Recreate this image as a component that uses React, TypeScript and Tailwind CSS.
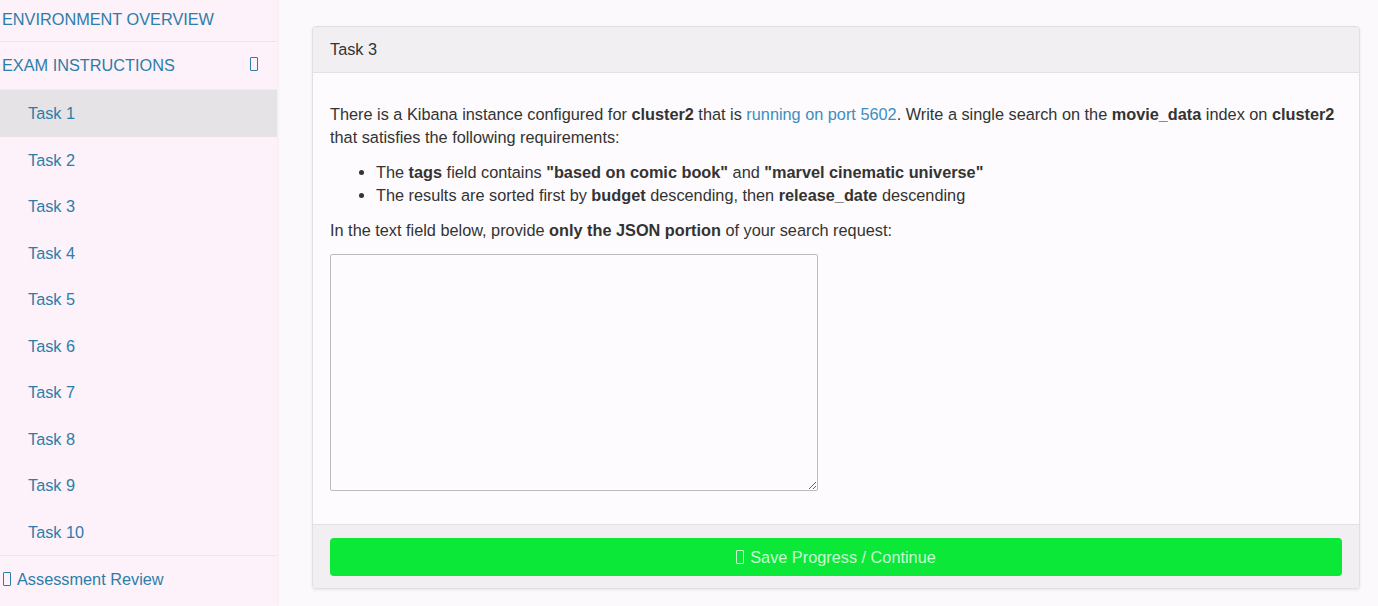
import React from "react";

const tasks = ["Task 1", "Task 2", "Task 3", "Task 4", "Task 5", "Task 6", "Task 7", "Task 8", "Task 9", "Task 10"];

function Tofu({ className = "" }: { className?: string }) {
  return <span className={`inline-block h-[14px] w-[8px] border border-current rounded-[1px] ${className}`} />;
}

export default function App() {
  return (
    <div
      className="flex h-[606px] w-[1378px] overflow-hidden bg-[#fcf9fc] text-[16.3px] text-[#333]"
      style={{ fontFamily: '"Liberation Sans", Arial, sans-serif' }}
    >
      <aside className="flex w-[277px] shrink-0 flex-col bg-[#fdf1fa] text-[#2b7ea8] shadow-[1px_0_3px_rgba(0,0,0,0.06)]">
        <div className="flex h-[42px] shrink-0 items-center border-b border-[#eee3eb] pl-[2px] pb-[3px] uppercase">
          Environment Overview
        </div>
        <div className="flex h-[48px] shrink-0 items-center justify-between border-b border-[#f3e8f0] pl-[2px] pr-[19px] uppercase">
          <span>Exam Instructions</span>
          <Tofu className="mb-[3px]" />
        </div>
        {tasks.map((t, i) => (
          <div
            key={t}
            className={`flex h-[46.5px] shrink-0 items-center pl-[28px] ${i === 0 ? "bg-[#e6e3e6]" : ""}`}
          >
            {t}
          </div>
        ))}
        <div className="flex h-[47px] shrink-0 items-center gap-[6px] border-t border-[#f1e5ee] pl-[3px]">
          <Tofu />
          <span>Assessment Review</span>
        </div>
      </aside>

      <main className="flex-1 pl-[35px] pr-[18px] pt-[26px]">
        <div className="overflow-hidden rounded-[4px] border border-[#e2dfe2] bg-[#fdfbfd] shadow-[0_1px_3px_rgba(0,0,0,0.08)]">
          <div className="flex h-[46px] items-center border-b border-[#e4e1e4] bg-[#f2eff2] px-[17px]">Task 3</div>
          <div className="px-[17px] pb-[33px] pt-[30px] leading-[23px]">
            <p>
              There is a Kibana instance configured for <b>cluster2</b> that is{" "}
              <a className="text-[#3b8ec2]">running on port 5602</a>. Write a single search on the <b>movie_data</b>{" "}
              index on <b>cluster2</b> that satisfies the following requirements:
            </p>
            <ul className="mt-[12px] list-disc pl-[46px]">
              <li>
                The <b>tags</b> field contains <b>"based on comic book"</b> and <b>"marvel cinematic universe"</b>
              </li>
              <li>
                The results are sorted first by <b>budget</b> descending, then <b>release_date</b> descending
              </li>
            </ul>
            <p className="mt-[12px]">
              In the text field below, provide <b>only the JSON portion</b> of your search request:
            </p>
            <textarea className="mt-[12px] block h-[237px] w-[488px] rounded-[2px] border border-[#bdbbbd] bg-[#fdfbfd]" />
          </div>
          <div className="border-t border-[#e4e1e4] bg-[#f2eff2] px-[17px] pb-[12px] pt-[13px]">
            <button className="flex h-[38px] w-full items-center justify-center gap-[6px] rounded-[4px] bg-[#0be838] text-[#c9fbd4]">
              <Tofu />
              <span>Save Progress / Continue</span>
            </button>
          </div>
        </div>
      </main>
    </div>
  );
}
